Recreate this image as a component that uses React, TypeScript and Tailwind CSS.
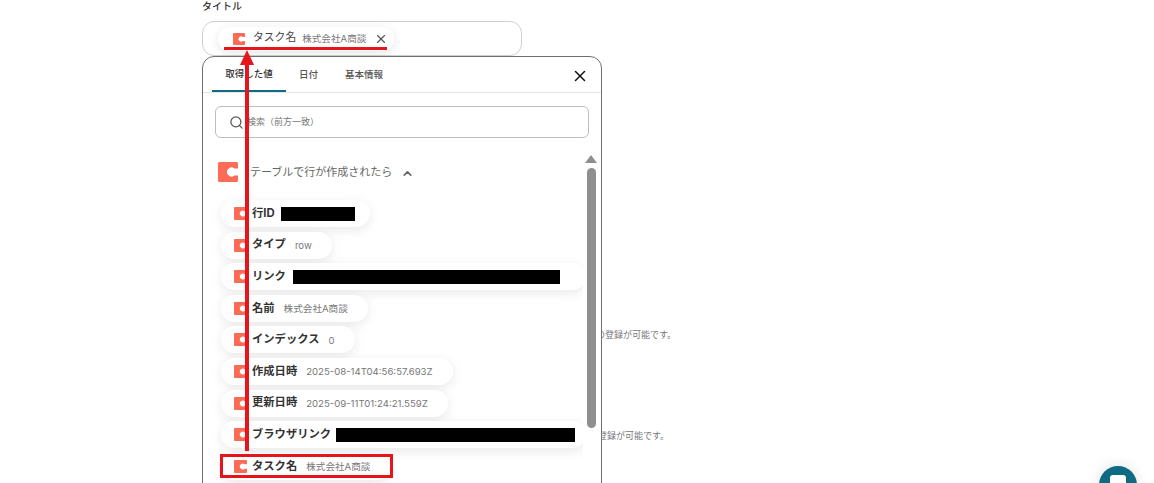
import React from 'react';
import { FiX, FiSearch, FiChevronUp } from 'react-icons/fi';

const FONT = "font-['Inter','Noto_Sans_CJK_JP',sans-serif]";

interface OutputRow {
  label: string;
  value?: string;
  redactWidth?: number;
  redactGap?: number;
  wide?: boolean;
}

const ROWS: OutputRow[] = [
  { label: '行ID', redactWidth: 74, redactGap: 6 },
  { label: 'タイプ', value: 'row' },
  { label: 'リンク', redactWidth: 267, redactGap: 7, wide: true },
  { label: '名前', value: '株式会社A商談' },
  { label: 'インデックス', value: '0' },
  { label: '作成日時', value: '2025-08-14T04:56:57.693Z' },
  { label: '更新日時', value: '2025-09-11T01:24:21.559Z' },
  { label: 'ブラウザリンク', redactWidth: 239, redactGap: 5, wide: true },
  { label: 'タスク名', value: '株式会社A商談' },
];

function CodaIcon({ size = 13 }: { size?: number }) {
  return (
    <svg width={size} height={size} viewBox="0 0 20 20" className="shrink-0">
      <path
        d="M1.5 0H18.5A1.5 1.5 0 0 1 20 1.5V6.6H16.5A4.5 4.5 0 1 0 16.5 13.4H20V18.5A1.5 1.5 0 0 1 18.5 20H1.5A1.5 1.5 0 0 1 0 18.5V1.5A1.5 1.5 0 0 1 1.5 0Z"
        fill="#fb6b55"
      />
    </svg>
  );
}

function RowChip({ row }: { row: OutputRow }) {
  return (
    <div
      className={`flex h-[27px] items-center rounded-full bg-white pl-[13px] shadow-[0_3px_12px_rgba(0,0,0,0.09)] ${
        row.wide ? 'w-[365px] shrink-0' : row.value ? 'w-fit pr-[20px]' : 'w-fit pr-[15px]'
      }`}
    >
      <CodaIcon />
      <span className="ml-[5px] text-[11.3px] leading-none font-bold text-[#333] whitespace-nowrap">{row.label}</span>
      {row.value && <span className="ml-[9px] mt-[1px] text-[9.6px] leading-none text-[#777] whitespace-nowrap">{row.value}</span>}
      {row.redactWidth && (
        <span className="block h-[14px] shrink-0 bg-black" style={{ width: row.redactWidth, marginLeft: row.redactGap }} />
      )}
    </div>
  );
}

function VariablePopup() {
  return (
    <div className="absolute left-[202px] top-[56px] h-[460px] w-[400px] overflow-hidden rounded-xl border border-[#707070] bg-white">
      <div className="flex h-[36px] items-end justify-between border-b border-[#e6e6e6] pl-[9px] pr-[12px]">
        <div className="flex text-[9.5px] font-medium text-[#555]">
          <div className="flex h-[35px] w-[74px] items-center justify-center border-b-2 border-[#0f6b82] pt-[2px] text-[#333]">取得した値</div>
          <div className="flex h-[35px] w-[45px] items-center justify-center pt-[2px]">日付</div>
          <div className="flex h-[35px] w-[66px] items-center justify-center pt-[2px]">基本情報</div>
        </div>
        <FiX className="mb-[7px] text-[#111]" size={18} strokeWidth={2} />
      </div>

      <div className="mx-[12px] mt-[13px] flex h-[32px] w-[374px] items-center rounded-md border border-[#bdbdbd] pl-[13px]">
        <FiSearch className="text-[#555]" size={15} />
        <span className="ml-[3px] text-[9px] text-[#777]">検索（前方一致）</span>
      </div>

      <div className="relative flex">
        <div className="w-[380px] overflow-hidden pl-[15px] pt-[24px]">
          <div className="flex items-center">
            <CodaIcon size={20} />
            <span className="ml-[12px] text-[11px] leading-none text-[#666]">テーブルで行が作成されたら</span>
            <FiChevronUp className="ml-[9px] mt-[2px] text-[#666]" size={13} strokeWidth={3} />
          </div>
          <div className="ml-[3px] mt-[18px] flex flex-col gap-[4.6px] pb-10">
            {ROWS.map((row) => (
              <RowChip key={row.label} row={row} />
            ))}
          </div>
        </div>
        <div className="ml-[2px] flex flex-col items-center pt-[17px]">
          <div className="h-0 w-0 border-x-[6px] border-b-[8px] border-x-transparent border-b-[#8f8f8f]" />
          <div className="mt-[5px] h-[260px] w-[9px] rounded-full bg-[#8f8f8f]" />
        </div>
      </div>
    </div>
  );
}

export default function App() {
  return (
    <div className={`relative h-[483px] w-[1154px] overflow-hidden bg-white ${FONT}`}>
      <div className="ml-[202px] w-[474px]">
        <div className="h-[21px] pt-[1px] text-[10px] leading-[11px] font-medium text-[#333]">タイトル</div>
        <div className="flex h-[35px] w-[320px] items-center rounded-xl border border-[#cfcfcf] pl-[15px]">
          <div className="flex h-[24px] w-[176px] items-center rounded-full bg-white pl-[15px] shadow-[0_2px_10px_rgba(0,0,0,0.1)]">
            <CodaIcon size={12} />
            <span className="ml-[8px] text-[10.8px] leading-none text-[#444] whitespace-nowrap">タスク名</span>
            <span className="ml-[6px] text-[9.6px] leading-none text-[#777] whitespace-nowrap">株式会社A商談</span>
            <FiX className="ml-[8px] shrink-0 text-[#555]" size={14} />
          </div>
        </div>
        <div className="mt-[272px] whitespace-nowrap text-right text-[9px] leading-[14px] text-[#777]">テキストや数値の登録が可能です。</div>
        <div className="mt-[87px] whitespace-nowrap pr-[7px] text-right text-[9px] leading-[14px] text-[#777]">テキストや数値の登録が可能です。</div>
      </div>

      <VariablePopup />

      {/* red annotations */}
      <div className="absolute left-[224px] top-[47px] h-[3px] w-[163px] bg-[#e8141c]" />
      <div className="absolute left-[245px] top-[64px] h-[387px] w-[3.5px] bg-[#e8141c]" />
      <div className="absolute left-[240px] top-[50px] h-0 w-0 border-x-[7px] border-b-[15px] border-x-transparent border-b-[#e8141c]" />
      <div className="absolute left-[220px] top-[454px] h-[24px] w-[173px] border-[3px] border-[#e8141c]" />

      <div className="absolute left-[1099px] top-[466px] flex h-[38px] w-[38px] justify-center rounded-full bg-[#0f6b82] pt-[9px] shadow-[0_0_14px_rgba(0,0,0,0.12)]">
        <div className="h-[16px] w-[16px] rounded-[3px] bg-white" />
      </div>
    </div>
  );
}
